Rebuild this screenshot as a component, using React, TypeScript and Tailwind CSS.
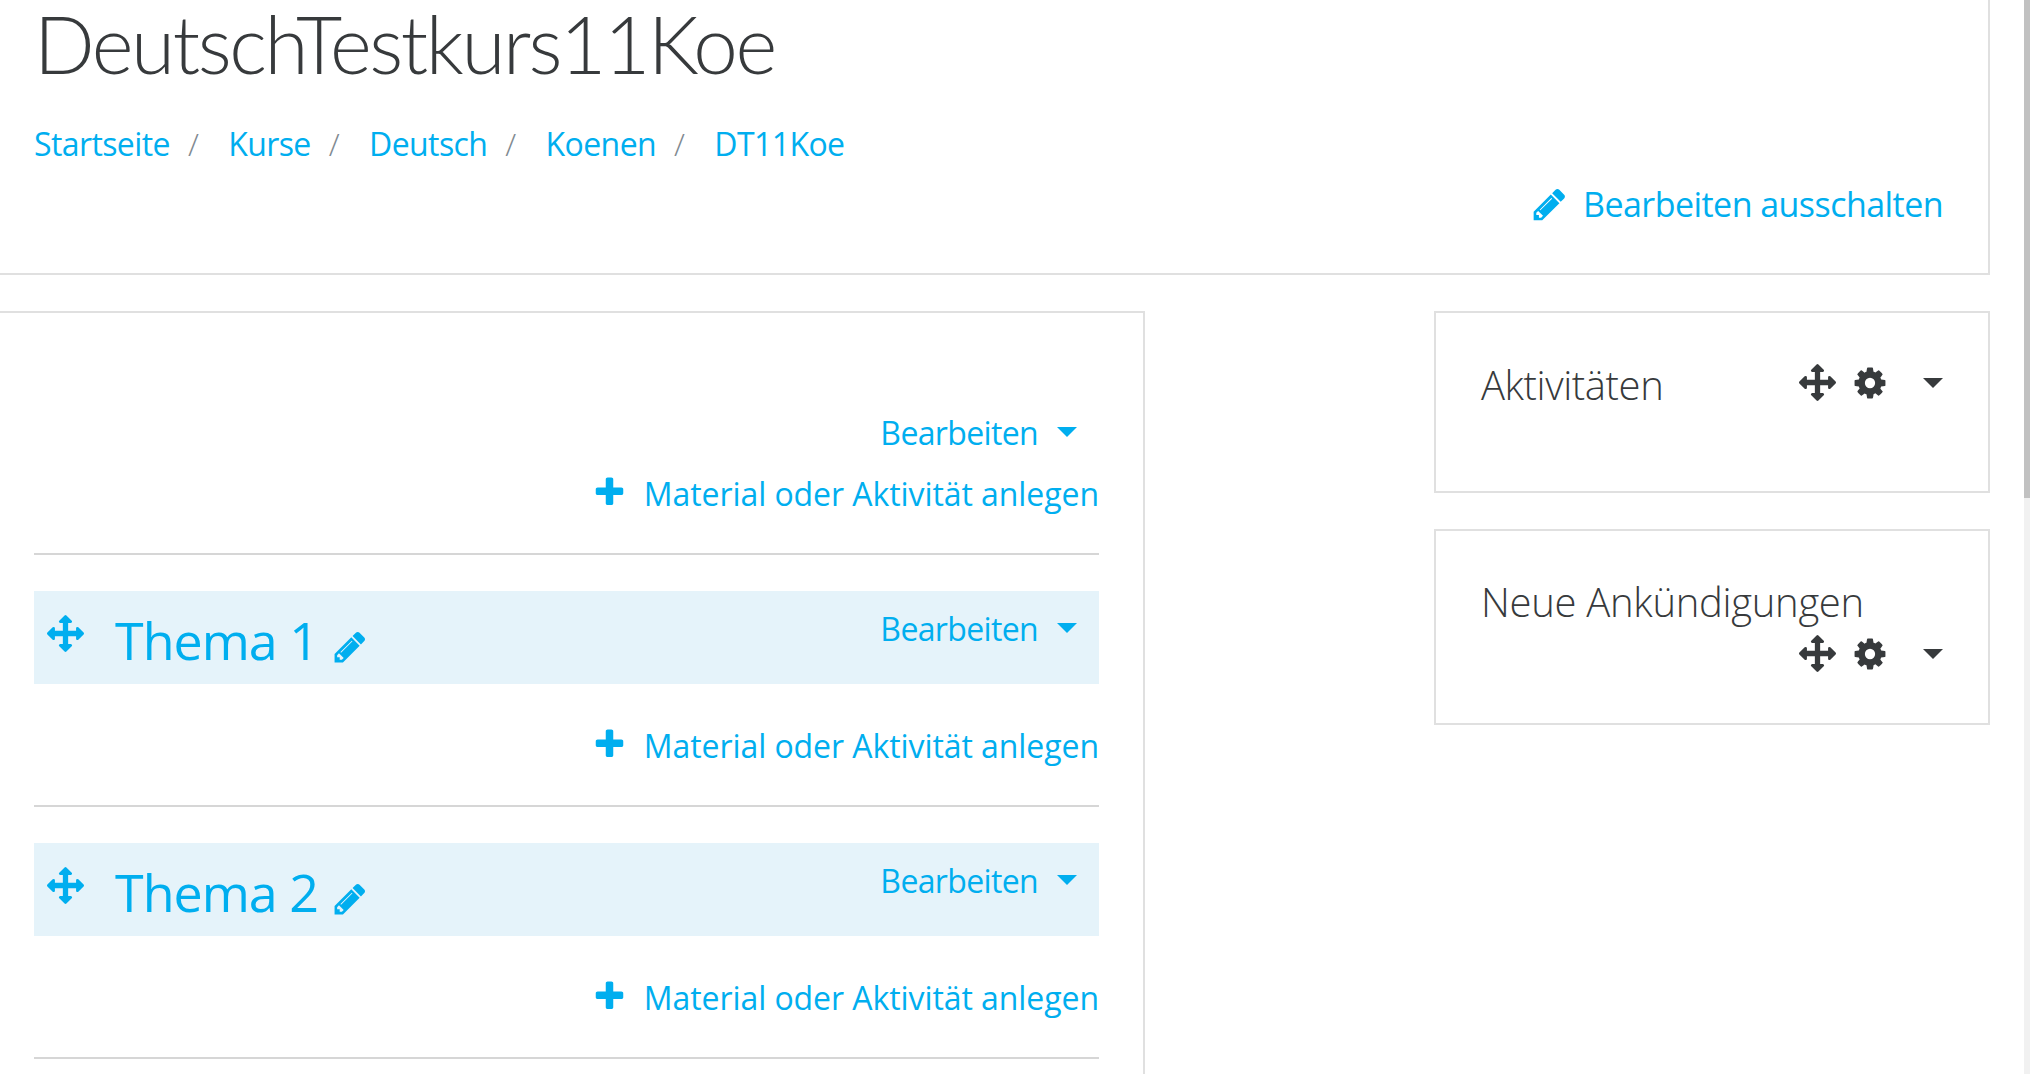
import React from "react";

const FONT = "font-['Open_Sans',sans-serif]";

const PENCIL =
  "M491 1536l91-91-235-235-91 91v107h128v128h107zm523-928q0-22-22-22-10 0-17 7l-542 542q-7 7-7 17 0 22 22 22 10 0 17-7l542-542q7-7 7-17zm-54-192l416 416-832 832h-416v-416zm683 96q0 53-37 90l-166 166-416-416 166-165q36-38 90-38 53 0 91 38l235 234q37 39 37 91z";
const ARROWS =
  "M1792 896q0 26-19 45l-256 256q-19 19-45 19t-45-19-19-45v-128h-384v384h128q26 0 45 19t19 45-19 45l-256 256q-19 19-45 19t-45-19l-256-256q-19-19-19-45t19-45 45-19h128v-384h-384v128q0 26-19 45t-45 19-45-19l-256-256q-19-19-19-45t19-45l256-256q19-19 45-19t45 19 19 45v128h384v-384h-128q-26 0-45-19t-19-45 19-45l256-256q19-19 45-19t45 19l256 256q19 19 19 45t-19 45-45 19h-128v384h384v-128q0-26 19-45t45-19 45 19l256 256q19 19 19 45z";
const PLUS =
  "M1600 736v192q0 40-28 68t-68 28h-416v416q0 40-28 68t-68 28h-192q-40 0-68-28t-28-68v-416h-416q-40 0-68-28t-28-68v-192q0-40 28-68t68-28h416v-416q0-40 28-68t68-28h192q40 0 68 28t28 68v416h416q40 0 68 28t28 68z";
const COG =
  "M1152 896q0-106-75-181t-181-75-181 75-75 181 75 181 181 75 181-75 75-181zm512-109v222q0 12-8 23t-20 13l-185 28q-19 54-39 91 35 50 107 138 10 12 10 25t-9 23q-27 37-99 108t-94 71q-12 0-26-9l-138-108q-44 23-91 38-16 136-29 186-7 28-36 28h-222q-14 0-24.5-8.5t-11.5-21.5l-28-184q-49-16-90-37l-141 107q-10 9-25 9-14 0-25-11-126-114-165-168-7-10-7-23 0-12 8-23 15-21 51-66.5t54-70.5q-27-50-41-99l-183-27q-13-2-21-12.5t-8-23.5v-222q0-12 8-23t19-13l186-28q14-46 39-92-40-57-107-138-10-12-10-24 0-10 9-23 26-36 98.5-107.5t94.5-71.5q13 0 26 10l138 107q44-23 91-38 16-136 29-186 7-28 36-28h222q14 0 24.5 8.5t11.5 21.5l28 184q49 16 90 37l142-107q9-9 24-9 13 0 25 10 129 119 165 170 7 8 7 22 0 12-8 23-15 21-51 66.5t-54 70.5q26 50 41 98l183 28q13 2 21 12.5t8 23.5z";

function Icon({ d, className }: { d: string; className: string }) {
  return (
    <svg viewBox="0 0 1792 1792" fill="currentColor" className={className}>
      <path d={d} />
    </svg>
  );
}

function Caret({ className }: { className: string }) {
  return (
    <svg viewBox="0 0 20 10" fill="currentColor" className={className}>
      <path d="M0 0h20L10 10z" />
    </svg>
  );
}

function EditMenu({ offset }: { offset: string }) {
  return (
    <div className={`flex items-center text-[32px] leading-[40px] tracking-[-0.65px] ${offset}`}>
      <span>Bearbeiten</span>
      <Caret className="ml-[19px] mt-[-3px] h-[10px] w-[20px]" />
    </div>
  );
}

function AddRow() {
  return (
    <div className="flex items-center justify-end text-[32px] leading-[40px] tracking-[-0.07px]">
      <Icon d={PLUS} className="mr-[17px] mt-[-3px] h-[35px] w-[35px]" />
      <span>Material oder Aktivität anlegen</span>
    </div>
  );
}

function Topic({ name }: { name: string }) {
  return (
    <div>
      <div className="flex h-[93px] items-start justify-between bg-[#e5f3fa] pl-[13px] pr-[22px]">
        <div className="flex items-start">
          <Icon d={ARROWS} className="mt-[24px] h-[37px] w-[37px]" />
          <span className="ml-[31px] mt-[17px] text-[52px] leading-[64px] tracking-[-1px]">{name}</span>
          <Icon d={PENCIL} className="ml-[14px] mt-[38px] h-[36px] w-[36px]" />
        </div>
        <EditMenu offset="mt-[18px]" />
      </div>
      <div className="pt-[42px]">
        <AddRow />
      </div>
      <div className="mt-[39px] h-[2px] bg-[#d6d6d6]" />
    </div>
  );
}

function BlockControls({ className }: { className: string }) {
  return (
    <div className={`flex items-center text-[#373a3c] ${className}`}>
      <Icon d={ARROWS} className="h-[37px] w-[37px]" />
      <Icon d={COG} className="ml-[16px] h-[36px] w-[36px]" />
      <Caret className="ml-[35px] h-[10px] w-[20px]" />
    </div>
  );
}

export default function App() {
  return (
    <div className={`flex h-screen overflow-hidden bg-white text-[#00aeef] ${FONT}`}>
      <div className="min-w-0 flex-1">
        <header className="mr-[34px] h-[275px] border-r-2 border-b-2 border-[#e0e0e0] pl-[34px] pr-[45px]">
          <h1 className="text-[80px] font-['Lato',sans-serif] font-light leading-[86px] tracking-[-2.4px] text-[#373a3c]">DeutschTestkurs11Koe</h1>
          <nav className="mt-[38px] flex text-[32px] leading-[40px] tracking-[-0.6px]">
            {["Startseite", "Kurse", "Deutsch", "Koenen", "DT11Koe"].map((crumb, i) => (
              <React.Fragment key={crumb}>
                {i > 0 && <span className="pl-[18px] pr-[30px] font-light text-[#818a91]">/</span>}
                <span>{crumb}</span>
              </React.Fragment>
            ))}
          </nav>
          <div className="mt-[20px] flex items-center justify-end text-[34px] leading-[40px] tracking-[-0.55px]">
            <Icon d={PENCIL} className="mr-[15px] h-[37px] w-[37px]" />
            <span>Bearbeiten ausschalten</span>
          </div>
        </header>

        <div className="mr-[34px] mt-[36px] flex items-start justify-between">
          <main className="h-[800px] w-[1145px] border-t-2 border-r-2 border-[#e0e0e0] pl-[34px] pr-[44px]">
            <div className="flex flex-col items-end pt-[100px]">
              <EditMenu offset="mr-[22px]" />
            </div>
            <div className="pt-[21px]">
              <AddRow />
            </div>
            <div className="mt-[39px] mb-[36px] h-[2px] bg-[#d6d6d6]" />
            <div className="flex flex-col gap-[36px]">
              <Topic name="Thema 1" />
              <Topic name="Thema 2" />
            </div>
          </main>

          <aside className="flex w-[556px] flex-col gap-[36px]">
            <section className="h-[182px] border-2 border-[#e0e0e0] pl-[45px] pr-[45px] pt-[45px] text-[#373a3c]">
              <div className="flex items-start justify-between">
                <h2 className="text-[40px] font-light leading-[54px] tracking-[-0.4px]">Aktivitäten</h2>
                <BlockControls className="mt-[6px]" />
              </div>
            </section>
            <section className="h-[196px] border-2 border-[#e0e0e0] pl-[45px] pr-[45px] pt-[44px] text-[#373a3c]">
              <h2 className="text-[40px] font-light leading-[54px] tracking-[-0.3px]">Neue Ankündigungen</h2>
              <BlockControls className="mt-[6px] justify-end" />
            </section>
          </aside>
        </div>
      </div>
      <div className="flex h-full w-[6px] shrink-0 flex-col bg-[#f1f1f1]">
        <div className="h-[498px] bg-[#c1c1c1]" />
      </div>
    </div>
  );
}
